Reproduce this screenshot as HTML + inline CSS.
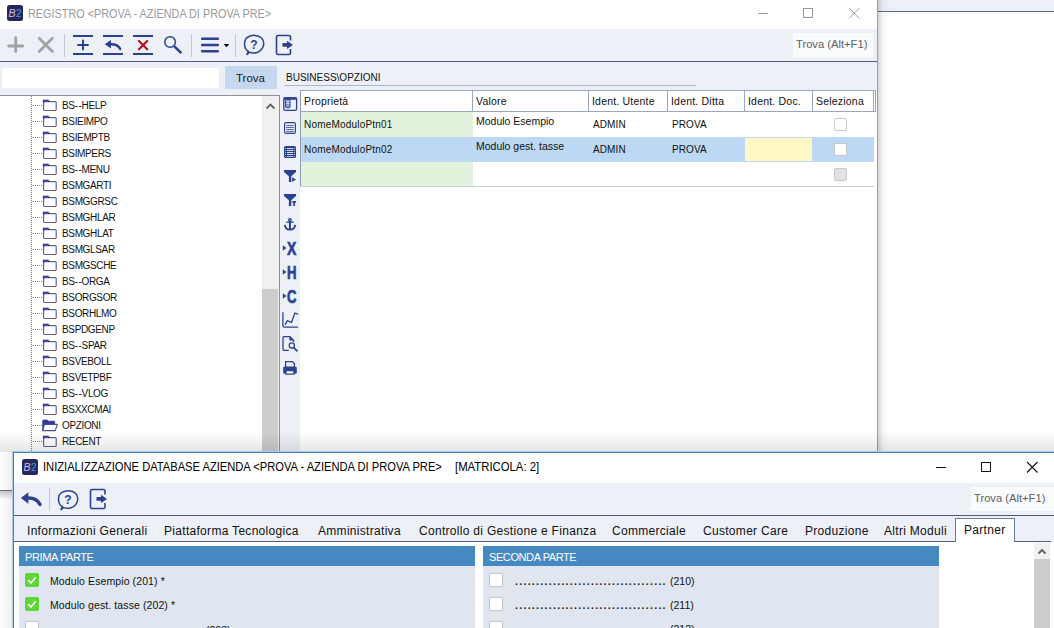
<!DOCTYPE html>
<html><head><meta charset="utf-8">
<style>
*{margin:0;padding:0;box-sizing:border-box}
html,body{width:1054px;height:628px;overflow:hidden;background:#fff;font-family:"Liberation Sans",sans-serif;color:#000}
.a{position:absolute}
.t{position:absolute;white-space:pre;line-height:1}
svg{position:absolute;overflow:visible}
</style></head><body>

<!-- background window on right -->
<div class="a" style="left:877px;top:0;width:177px;height:11px;background:#edf0f7"></div>
<div class="a" style="left:877px;top:11px;width:177px;height:1px;background:#5d6d8a"></div>
<div class="a" style="left:878px;top:0;width:12px;height:628px;background:linear-gradient(to right,rgba(0,0,0,0.16),rgba(0,0,0,0.04) 40%,rgba(0,0,0,0))"></div>
<div class="a" style="left:0;top:490px;width:877px;height:10px;background:linear-gradient(to bottom,rgba(0,0,0,0.12),rgba(0,0,0,0))"></div>

<!-- WINDOW 1 -->
<div id="w1" class="a" style="left:0;top:0;width:878px;height:491px;background:#fff;border-right:1px solid #8a8f99;border-bottom:1px solid #8a8f99">
</div>
<div id="w1c">
  <!-- title -->
  <svg style="left:7px;top:5px" width="16" height="16" viewBox="0 0 16 16">
    <rect x="0" y="0" width="16" height="16" rx="2.5" fill="#27285a"/>
    <text x="1.6" y="12" font-family="Liberation Sans" font-style="italic" font-size="10.5" fill="#c4c2e6">B</text>
    <text x="8.9" y="12" font-family="Liberation Sans" font-size="10" fill="#3a9ee0">2</text>
  </svg>
  <div class="t" style="left:28px;top:8px;font-size:12.2px;color:#9a9a9a;transform:scaleX(0.89);transform-origin:0 0">REGISTRO &lt;PROVA - AZIENDA DI PROVA PRE&gt;</div>
  <!-- window controls -->
  <svg style="left:0;top:0" width="877" height="29">
    <line x1="758" y1="13.5" x2="768" y2="13.5" stroke="#9a9a9a" stroke-width="1"/>
    <rect x="803.5" y="8.5" width="9" height="9" fill="none" stroke="#9a9a9a" stroke-width="1"/>
    <path d="M849 8 L859.5 18.5 M859.5 8 L849 18.5" stroke="#9a9a9a" stroke-width="0.9"/>
  </svg>
  <!-- toolbar -->
  <div class="a" style="left:0;top:29px;width:877px;height:66px;background:#edf0f7"></div>
  <div class="a" style="left:0;top:61px;width:877px;height:1px;background:#4e5f7e"></div>
  <svg style="left:0;top:29px" width="877" height="32" viewBox="0 29 877 32">
    <g stroke="#a3a3a3" stroke-width="2.8" stroke-linecap="round" fill="none">
      <path d="M15.7 37.6 V51.6 M8.7 46 H22.7"/>
      <path d="M39.2 38.2 L52.4 51.4 M52.4 38.2 L39.2 51.4"/>
    </g>
    <g stroke="#c3c7cf" stroke-width="1"><path d="M64.5 34 V57 M191.5 34 V57 M235.5 34 V57"/></g>
    <g fill="#2c4290">
      <rect x="73" y="35" width="20" height="2"/><rect x="73" y="53" width="20" height="2"/>
      <rect x="103" y="35" width="20" height="2"/><rect x="103" y="53" width="20" height="2"/>
      <rect x="133" y="35" width="20" height="2"/><rect x="133" y="53" width="20" height="2"/>
    </g>
    <path d="M83 40.5 V49.5 M78 45 H88" stroke="#2c4290" stroke-width="2" stroke-linecap="round"/>
    <path d="M104.8 44.2 L111 40 V48.4 Z" fill="#2c4290"/><path d="M110.5 44.2 Q117.5 43.8 120.2 48.9" fill="none" stroke="#2c4290" stroke-width="2.5" stroke-linecap="round"/>
    <path d="M139 41 L147.2 49.2 M147.2 41 L139 49.2" stroke="#b0141e" stroke-width="2.2" stroke-linecap="round"/>
    <circle cx="170.1" cy="42" r="5.3" fill="none" stroke="#2c4290" stroke-width="1.5"/>
    <path d="M174.6 46.6 L180.6 52.4" stroke="#2c4290" stroke-width="2.6" stroke-linecap="round"/>
    <g fill="#2c4290"><rect x="201" y="37.4" width="18" height="2.6" rx="1"/><rect x="201" y="43.7" width="18" height="2.6" rx="1"/><rect x="201" y="49.9" width="18" height="2.6" rx="1"/></g>
    <path d="M223.8 44 L229.3 44 L226.5 47.2 Z" fill="#000"/>
    <!-- help -->
    <path d="M248.3 51.2 C243.5 49 243.2 39.5 248 37 C252 34.6 258 34.8 261.5 38 C265.5 42 264 50 257 52.5 C254.5 53.3 251.5 53 249.5 52.3 L247 54.5 Z" fill="none" stroke="#2c4290" stroke-width="1.5" stroke-linejoin="round"/>
    <text x="254" y="48.6" text-anchor="middle" font-family="Liberation Sans" font-weight="bold" font-size="12" fill="#2c4290">?</text>
    <!-- exit -->
    <path d="M290.5 40.5 V37 Q290.5 35.5 289 35.5 H278 Q276.5 35.5 276.5 37 V53 Q276.5 54.5 278 54.5 H289 Q290.5 54.5 290.5 53 V49" fill="none" stroke="#2c4290" stroke-width="1.6"/>
    <path d="M282.5 43 H287 V40.8 L293 44.9 L287 49 V46.8 H282.5 Z" fill="#2c4290"/>
  </svg>
  <div class="a" style="left:793px;top:33px;width:80px;height:24px;background:#fafbfd"></div>
  <div class="t" style="left:796px;top:39px;font-size:11.2px;color:#5f5f5f">Trova (Alt+F1)</div>
  <!-- search row -->
  <div class="a" style="left:2px;top:68px;width:217px;height:20px;background:#fff"></div>
  <div class="a" style="left:225px;top:66px;width:52px;height:23px;background:#c5d8ef"></div>
  <div class="t" style="left:236px;top:73px;font-size:11.5px;color:#1a1a1a">Trova</div>
  <div class="t" style="left:286px;top:73px;font-size:10px;color:#111">BUSINESS\OPZIONI</div>
  <div class="a" style="left:284px;top:85px;width:412px;height:1px;background:#a9b8d0"></div>

  <!-- tree -->
  <div class="a" style="left:0;top:95px;width:280px;height:396px;background:#fff;border-top:1px solid #8d9096;border-right:1px solid #8d9096"></div>
  <div class="a" style="left:262px;top:96px;width:17px;height:395px;background:#f0f0f0"></div>
  <div class="a" style="left:262px;top:289px;width:16px;height:202px;background:#cdcdcd"></div>
  <svg style="left:262px;top:96px" width="17" height="20"><path d="M4.5 12.5 L8.5 8.5 L12.5 12.5" fill="none" stroke="#606060" stroke-width="1.8"/></svg>
  <div class="a" style="left:31px;top:96px;width:1px;height:395px;background:repeating-linear-gradient(to bottom,#808080 0 1px,transparent 1px 2px)"></div>
<div class="a" style="left:33px;top:105px;width:9px;height:1px;background:repeating-linear-gradient(to right,#808080 0 1px,transparent 1px 2px)"></div>
<svg style="left:42px;top:98px" width="16" height="14" viewBox="0 0 16 14"><rect x="1.6" y="3.6" width="12.6" height="8.9" rx="1" fill="#fff" stroke="#5d5f8c" stroke-width="1.15"/><path d="M1.6 4.5 V2.4 H6 L7.2 3.6" fill="none" stroke="#363b90" stroke-width="1.5"/></svg>
<div class="t" style="left:62px;top:101px;font-size:10px;letter-spacing:-0.35px;color:#111">BS<span style="letter-spacing:0.6px">-</span>-HELP</div>
<div class="a" style="left:33px;top:121px;width:9px;height:1px;background:repeating-linear-gradient(to right,#808080 0 1px,transparent 1px 2px)"></div>
<svg style="left:42px;top:114px" width="16" height="14" viewBox="0 0 16 14"><rect x="1.6" y="3.6" width="12.6" height="8.9" rx="1" fill="#fff" stroke="#5d5f8c" stroke-width="1.15"/><path d="M1.6 4.5 V2.4 H6 L7.2 3.6" fill="none" stroke="#363b90" stroke-width="1.5"/></svg>
<div class="t" style="left:62px;top:117px;font-size:10px;letter-spacing:-0.35px;color:#111">BSIEIMPO</div>
<div class="a" style="left:33px;top:137px;width:9px;height:1px;background:repeating-linear-gradient(to right,#808080 0 1px,transparent 1px 2px)"></div>
<svg style="left:42px;top:130px" width="16" height="14" viewBox="0 0 16 14"><rect x="1.6" y="3.6" width="12.6" height="8.9" rx="1" fill="#fff" stroke="#5d5f8c" stroke-width="1.15"/><path d="M1.6 4.5 V2.4 H6 L7.2 3.6" fill="none" stroke="#363b90" stroke-width="1.5"/></svg>
<div class="t" style="left:62px;top:133px;font-size:10px;letter-spacing:-0.35px;color:#111">BSIEMPTB</div>
<div class="a" style="left:33px;top:153px;width:9px;height:1px;background:repeating-linear-gradient(to right,#808080 0 1px,transparent 1px 2px)"></div>
<svg style="left:42px;top:146px" width="16" height="14" viewBox="0 0 16 14"><rect x="1.6" y="3.6" width="12.6" height="8.9" rx="1" fill="#fff" stroke="#5d5f8c" stroke-width="1.15"/><path d="M1.6 4.5 V2.4 H6 L7.2 3.6" fill="none" stroke="#363b90" stroke-width="1.5"/></svg>
<div class="t" style="left:62px;top:149px;font-size:10px;letter-spacing:-0.35px;color:#111">BSIMPERS</div>
<div class="a" style="left:33px;top:169px;width:9px;height:1px;background:repeating-linear-gradient(to right,#808080 0 1px,transparent 1px 2px)"></div>
<svg style="left:42px;top:162px" width="16" height="14" viewBox="0 0 16 14"><rect x="1.6" y="3.6" width="12.6" height="8.9" rx="1" fill="#fff" stroke="#5d5f8c" stroke-width="1.15"/><path d="M1.6 4.5 V2.4 H6 L7.2 3.6" fill="none" stroke="#363b90" stroke-width="1.5"/></svg>
<div class="t" style="left:62px;top:165px;font-size:10px;letter-spacing:-0.35px;color:#111">BS<span style="letter-spacing:0.6px">-</span>-MENU</div>
<div class="a" style="left:33px;top:185px;width:9px;height:1px;background:repeating-linear-gradient(to right,#808080 0 1px,transparent 1px 2px)"></div>
<svg style="left:42px;top:178px" width="16" height="14" viewBox="0 0 16 14"><rect x="1.6" y="3.6" width="12.6" height="8.9" rx="1" fill="#fff" stroke="#5d5f8c" stroke-width="1.15"/><path d="M1.6 4.5 V2.4 H6 L7.2 3.6" fill="none" stroke="#363b90" stroke-width="1.5"/></svg>
<div class="t" style="left:62px;top:181px;font-size:10px;letter-spacing:-0.35px;color:#111">BSMGARTI</div>
<div class="a" style="left:33px;top:201px;width:9px;height:1px;background:repeating-linear-gradient(to right,#808080 0 1px,transparent 1px 2px)"></div>
<svg style="left:42px;top:194px" width="16" height="14" viewBox="0 0 16 14"><rect x="1.6" y="3.6" width="12.6" height="8.9" rx="1" fill="#fff" stroke="#5d5f8c" stroke-width="1.15"/><path d="M1.6 4.5 V2.4 H6 L7.2 3.6" fill="none" stroke="#363b90" stroke-width="1.5"/></svg>
<div class="t" style="left:62px;top:197px;font-size:10px;letter-spacing:-0.35px;color:#111">BSMGGRSC</div>
<div class="a" style="left:33px;top:217px;width:9px;height:1px;background:repeating-linear-gradient(to right,#808080 0 1px,transparent 1px 2px)"></div>
<svg style="left:42px;top:210px" width="16" height="14" viewBox="0 0 16 14"><rect x="1.6" y="3.6" width="12.6" height="8.9" rx="1" fill="#fff" stroke="#5d5f8c" stroke-width="1.15"/><path d="M1.6 4.5 V2.4 H6 L7.2 3.6" fill="none" stroke="#363b90" stroke-width="1.5"/></svg>
<div class="t" style="left:62px;top:213px;font-size:10px;letter-spacing:-0.35px;color:#111">BSMGHLAR</div>
<div class="a" style="left:33px;top:233px;width:9px;height:1px;background:repeating-linear-gradient(to right,#808080 0 1px,transparent 1px 2px)"></div>
<svg style="left:42px;top:226px" width="16" height="14" viewBox="0 0 16 14"><rect x="1.6" y="3.6" width="12.6" height="8.9" rx="1" fill="#fff" stroke="#5d5f8c" stroke-width="1.15"/><path d="M1.6 4.5 V2.4 H6 L7.2 3.6" fill="none" stroke="#363b90" stroke-width="1.5"/></svg>
<div class="t" style="left:62px;top:229px;font-size:10px;letter-spacing:-0.35px;color:#111">BSMGHLAT</div>
<div class="a" style="left:33px;top:249px;width:9px;height:1px;background:repeating-linear-gradient(to right,#808080 0 1px,transparent 1px 2px)"></div>
<svg style="left:42px;top:242px" width="16" height="14" viewBox="0 0 16 14"><rect x="1.6" y="3.6" width="12.6" height="8.9" rx="1" fill="#fff" stroke="#5d5f8c" stroke-width="1.15"/><path d="M1.6 4.5 V2.4 H6 L7.2 3.6" fill="none" stroke="#363b90" stroke-width="1.5"/></svg>
<div class="t" style="left:62px;top:245px;font-size:10px;letter-spacing:-0.35px;color:#111">BSMGLSAR</div>
<div class="a" style="left:33px;top:265px;width:9px;height:1px;background:repeating-linear-gradient(to right,#808080 0 1px,transparent 1px 2px)"></div>
<svg style="left:42px;top:258px" width="16" height="14" viewBox="0 0 16 14"><rect x="1.6" y="3.6" width="12.6" height="8.9" rx="1" fill="#fff" stroke="#5d5f8c" stroke-width="1.15"/><path d="M1.6 4.5 V2.4 H6 L7.2 3.6" fill="none" stroke="#363b90" stroke-width="1.5"/></svg>
<div class="t" style="left:62px;top:261px;font-size:10px;letter-spacing:-0.35px;color:#111">BSMGSCHE</div>
<div class="a" style="left:33px;top:281px;width:9px;height:1px;background:repeating-linear-gradient(to right,#808080 0 1px,transparent 1px 2px)"></div>
<svg style="left:42px;top:274px" width="16" height="14" viewBox="0 0 16 14"><rect x="1.6" y="3.6" width="12.6" height="8.9" rx="1" fill="#fff" stroke="#5d5f8c" stroke-width="1.15"/><path d="M1.6 4.5 V2.4 H6 L7.2 3.6" fill="none" stroke="#363b90" stroke-width="1.5"/></svg>
<div class="t" style="left:62px;top:277px;font-size:10px;letter-spacing:-0.35px;color:#111">BS<span style="letter-spacing:0.6px">-</span>-ORGA</div>
<div class="a" style="left:33px;top:297px;width:9px;height:1px;background:repeating-linear-gradient(to right,#808080 0 1px,transparent 1px 2px)"></div>
<svg style="left:42px;top:290px" width="16" height="14" viewBox="0 0 16 14"><rect x="1.6" y="3.6" width="12.6" height="8.9" rx="1" fill="#fff" stroke="#5d5f8c" stroke-width="1.15"/><path d="M1.6 4.5 V2.4 H6 L7.2 3.6" fill="none" stroke="#363b90" stroke-width="1.5"/></svg>
<div class="t" style="left:62px;top:293px;font-size:10px;letter-spacing:-0.35px;color:#111">BSORGSOR</div>
<div class="a" style="left:33px;top:313px;width:9px;height:1px;background:repeating-linear-gradient(to right,#808080 0 1px,transparent 1px 2px)"></div>
<svg style="left:42px;top:306px" width="16" height="14" viewBox="0 0 16 14"><rect x="1.6" y="3.6" width="12.6" height="8.9" rx="1" fill="#fff" stroke="#5d5f8c" stroke-width="1.15"/><path d="M1.6 4.5 V2.4 H6 L7.2 3.6" fill="none" stroke="#363b90" stroke-width="1.5"/></svg>
<div class="t" style="left:62px;top:309px;font-size:10px;letter-spacing:-0.35px;color:#111">BSORHLMO</div>
<div class="a" style="left:33px;top:329px;width:9px;height:1px;background:repeating-linear-gradient(to right,#808080 0 1px,transparent 1px 2px)"></div>
<svg style="left:42px;top:322px" width="16" height="14" viewBox="0 0 16 14"><rect x="1.6" y="3.6" width="12.6" height="8.9" rx="1" fill="#fff" stroke="#5d5f8c" stroke-width="1.15"/><path d="M1.6 4.5 V2.4 H6 L7.2 3.6" fill="none" stroke="#363b90" stroke-width="1.5"/></svg>
<div class="t" style="left:62px;top:325px;font-size:10px;letter-spacing:-0.35px;color:#111">BSPDGENP</div>
<div class="a" style="left:33px;top:345px;width:9px;height:1px;background:repeating-linear-gradient(to right,#808080 0 1px,transparent 1px 2px)"></div>
<svg style="left:42px;top:338px" width="16" height="14" viewBox="0 0 16 14"><rect x="1.6" y="3.6" width="12.6" height="8.9" rx="1" fill="#fff" stroke="#5d5f8c" stroke-width="1.15"/><path d="M1.6 4.5 V2.4 H6 L7.2 3.6" fill="none" stroke="#363b90" stroke-width="1.5"/></svg>
<div class="t" style="left:62px;top:341px;font-size:10px;letter-spacing:-0.35px;color:#111">BS<span style="letter-spacing:0.6px">-</span>-SPAR</div>
<div class="a" style="left:33px;top:361px;width:9px;height:1px;background:repeating-linear-gradient(to right,#808080 0 1px,transparent 1px 2px)"></div>
<svg style="left:42px;top:354px" width="16" height="14" viewBox="0 0 16 14"><rect x="1.6" y="3.6" width="12.6" height="8.9" rx="1" fill="#fff" stroke="#5d5f8c" stroke-width="1.15"/><path d="M1.6 4.5 V2.4 H6 L7.2 3.6" fill="none" stroke="#363b90" stroke-width="1.5"/></svg>
<div class="t" style="left:62px;top:357px;font-size:10px;letter-spacing:-0.35px;color:#111">BSVEBOLL</div>
<div class="a" style="left:33px;top:377px;width:9px;height:1px;background:repeating-linear-gradient(to right,#808080 0 1px,transparent 1px 2px)"></div>
<svg style="left:42px;top:370px" width="16" height="14" viewBox="0 0 16 14"><rect x="1.6" y="3.6" width="12.6" height="8.9" rx="1" fill="#fff" stroke="#5d5f8c" stroke-width="1.15"/><path d="M1.6 4.5 V2.4 H6 L7.2 3.6" fill="none" stroke="#363b90" stroke-width="1.5"/></svg>
<div class="t" style="left:62px;top:373px;font-size:10px;letter-spacing:-0.35px;color:#111">BSVETPBF</div>
<div class="a" style="left:33px;top:393px;width:9px;height:1px;background:repeating-linear-gradient(to right,#808080 0 1px,transparent 1px 2px)"></div>
<svg style="left:42px;top:386px" width="16" height="14" viewBox="0 0 16 14"><rect x="1.6" y="3.6" width="12.6" height="8.9" rx="1" fill="#fff" stroke="#5d5f8c" stroke-width="1.15"/><path d="M1.6 4.5 V2.4 H6 L7.2 3.6" fill="none" stroke="#363b90" stroke-width="1.5"/></svg>
<div class="t" style="left:62px;top:389px;font-size:10px;letter-spacing:-0.35px;color:#111">BS<span style="letter-spacing:0.6px">-</span>-VLOG</div>
<div class="a" style="left:33px;top:409px;width:9px;height:1px;background:repeating-linear-gradient(to right,#808080 0 1px,transparent 1px 2px)"></div>
<svg style="left:42px;top:402px" width="16" height="14" viewBox="0 0 16 14"><rect x="1.6" y="3.6" width="12.6" height="8.9" rx="1" fill="#fff" stroke="#5d5f8c" stroke-width="1.15"/><path d="M1.6 4.5 V2.4 H6 L7.2 3.6" fill="none" stroke="#363b90" stroke-width="1.5"/></svg>
<div class="t" style="left:62px;top:405px;font-size:10px;letter-spacing:-0.35px;color:#111">BSXXCMAI</div>
<div class="a" style="left:33px;top:425px;width:9px;height:1px;background:repeating-linear-gradient(to right,#808080 0 1px,transparent 1px 2px)"></div>
<svg style="left:42px;top:418px" width="16" height="14" viewBox="0 0 16 14"><path d="M0.7 12.6 V3 Q0.7 2 1.7 2 H5.2 L6.2 3.2 H12.6 V6.2 H2.4 Z" fill="#3437a0" stroke="#3437a0" stroke-width="0.8" stroke-linejoin="round"/><path d="M2.4 6.4 H15.4 L13.2 12.6 H0.9 Z" fill="#fff" stroke="#4a4d8c" stroke-width="1.1" stroke-linejoin="round"/></svg>
<div class="t" style="left:62px;top:421px;font-size:10px;letter-spacing:-0.35px;color:#111">OPZIONI</div>
<div class="a" style="left:33px;top:441px;width:9px;height:1px;background:repeating-linear-gradient(to right,#808080 0 1px,transparent 1px 2px)"></div>
<svg style="left:42px;top:434px" width="16" height="14" viewBox="0 0 16 14"><rect x="1.6" y="3.6" width="12.6" height="8.9" rx="1" fill="#fff" stroke="#5d5f8c" stroke-width="1.15"/><path d="M1.6 4.5 V2.4 H6 L7.2 3.6" fill="none" stroke="#363b90" stroke-width="1.5"/></svg>
<div class="t" style="left:62px;top:437px;font-size:10px;letter-spacing:-0.35px;color:#111">RECENT</div>
<div class="a" style="left:33px;top:457px;width:9px;height:1px;background:repeating-linear-gradient(to right,#808080 0 1px,transparent 1px 2px)"></div>
<svg style="left:43px;top:450px" width="16" height="14" viewBox="0 0 16 14"><rect x="1" y="3" width="13" height="10" rx="1" fill="#fff" stroke="#5a5f9a" stroke-width="1.2"/><path d="M1 3.5 V2 H5.5 L6.8 3.3" fill="none" stroke="#3a3f9a" stroke-width="1.6"/></svg>

  <!-- icon column -->
  <div class="a" style="left:280px;top:95px;width:20px;height:396px;background:#edf0f7"></div>
  <svg style="left:280px;top:95px" width="20" height="290" viewBox="280 95 20 290">
<rect x="283.8" y="97.8" width="12.8" height="12.6" rx="1.6" fill="none" stroke="#2c4290" stroke-width="1.3"/>
<rect x="283.5" y="97.3" width="13.4" height="2.4" rx="0.8" fill="#2c4290"/>
<rect x="285.6" y="99.4" width="4.5" height="8.4" rx="1" fill="#8a9ad8" stroke="#2c4290" stroke-width="1"/>
<g fill="#fff"><rect x="286.4" y="101.2" width="3" height="0.7"/><rect x="286.4" y="103.1" width="3" height="0.7"/></g>
<rect x="284.6" y="122.6" width="10.8" height="10.8" rx="1.5" fill="none" stroke="#2c4290" stroke-width="1.2"/>
<g fill="#2c4290"><rect x="286.2" y="125" width="7.6" height="0.8"/><rect x="286.2" y="127" width="7.6" height="0.8"/><rect x="286.2" y="129" width="7.6" height="0.8"/><rect x="286.2" y="131" width="7.6" height="0.8"/></g>
<rect x="284" y="146" width="12" height="12" rx="1.6" fill="#2c4290"/>
<g fill="#fff"><rect x="285.3" y="148.2" width="0.8" height="0.8"/><rect x="285.3" y="150.2" width="0.8" height="0.8"/><rect x="285.3" y="152.2" width="0.8" height="0.8"/><rect x="285.3" y="154.2" width="0.8" height="0.8"/><rect x="285.3" y="156.2" width="0.8" height="0.6"/><rect x="294" y="148.2" width="0.8" height="0.8"/><rect x="294" y="150.2" width="0.8" height="0.8"/><rect x="294" y="152.2" width="0.8" height="0.8"/><rect x="294" y="154.2" width="0.8" height="0.8"/><rect x="294" y="156.2" width="0.8" height="0.6"/><rect x="287" y="148.2" width="6.3" height="0.8"/><rect x="287" y="150.2" width="6.3" height="0.8"/><rect x="287" y="152.2" width="6.3" height="0.8"/><rect x="287" y="154.2" width="6.3" height="0.8"/><rect x="287" y="156.2" width="6.3" height="0.6"/></g>
<path d="M284 170 H296 V172 L291.3 176.3 V182 H288.9 V176.3 L284 172 Z" fill="#2c4290"/>
<path d="M292.2 177.3 L296 179.6 L292.2 182 Z" fill="#2c4290"/>
<path d="M284 194 H296 V196 L291.3 200.3 V206 H288.9 V200.3 L284 196 Z" fill="#2c4290"/>
<path d="M292.2 201 H296 V202.8 H295 V206 H293.3 V202.8 H292.2 Z" fill="#2c4290"/>
<!-- anchor -->
<circle cx="289.9" cy="219.9" r="1.4" fill="#8a9ad8" stroke="#2c4290" stroke-width="1.1"/>
<path d="M289.95 221 V229" stroke="#2c4290" stroke-width="2"/>
<path d="M286.2 222.2 H293.7" stroke="#2c4290" stroke-width="1.3"/>
<path d="M284.8 224.8 Q285.3 229.6 290 229.6 Q294.7 229.6 295.2 224.8" fill="none" stroke="#2c4290" stroke-width="1.8"/>
<!-- >X >H >C -->
<path d="M282.8 245.3 L286.5 248 L282.8 250.7 Z" fill="#2c4290"/>
<text transform="translate(287,254.6) scale(0.8,1)" font-family="Liberation Sans" font-weight="bold" font-size="17.5" fill="#2c4290" stroke="#2c4290" stroke-width="0.7">X</text>
<path d="M282.8 269.3 L286.5 272 L282.8 274.7 Z" fill="#2c4290"/>
<text transform="translate(287,278.6) scale(0.75,1)" font-family="Liberation Sans" font-weight="bold" font-size="17.5" fill="#2c4290" stroke="#2c4290" stroke-width="0.7">H</text>
<path d="M282.8 293.3 L286.5 296 L282.8 298.7 Z" fill="#2c4290"/>
<text transform="translate(287,302.6) scale(0.75,1)" font-family="Liberation Sans" font-weight="bold" font-size="17.5" fill="#2c4290" stroke="#2c4290" stroke-width="0.7">C</text>
<!-- chart -->
<path d="M282.9 312.2 V325.5 Q282.9 327.2 284.6 327.2 H298" fill="none" stroke="#2c4290" stroke-width="1.3"/>
<path d="M285.3 324.4 L287.4 320.6 L291.5 322.5 L294.9 313 L297.6 314.1" fill="none" stroke="#2c4290" stroke-width="1.3" stroke-linejoin="round" stroke-linecap="round"/>
<!-- doc search -->
<path d="M288.8 350.3 H284.2 Q283 350.3 283 349 V337.9 Q283 336.7 284.2 336.7 H290 L293.6 340.4 V342" fill="none" stroke="#2c4290" stroke-width="1.3" stroke-linejoin="round"/>
<path d="M289.4 336.7 H290.2 L293.8 340.5 H289.4 Z" fill="#2c4290"/>
<circle cx="291.8" cy="345.4" r="2.6" fill="none" stroke="#2c4290" stroke-width="1.3"/>
<path d="M293.8 347.6 L297 350.9" stroke="#2c4290" stroke-width="1.7" stroke-linecap="round"/>
<!-- printer -->
<path d="M285.6 367 V361.6 H292.4 L294.4 363.6 V367" fill="none" stroke="#2c4290" stroke-width="1.3"/>
<rect x="283.2" y="366.6" width="13.6" height="7.2" rx="1.5" fill="#2c4290"/>
<rect x="286.3" y="371.3" width="7.3" height="2.2" fill="#fff"/>
<path d="M285.9 371 V374.2 H294 V371" fill="none" stroke="#2c4290" stroke-width="1.1"/>
</svg>

  <!-- grid -->
  <div class="a" style="left:300px;top:90px;width:577px;height:401px;background:#fff"></div>
<div class="a" style="left:300px;top:90px;width:1px;height:97px;background:#8f9bb3"></div>
  <div class="a" style="left:300px;top:90px;width:576px;height:1px;background:#9aa6bc"></div>
<div class="a" style="left:300px;top:111px;width:576px;height:1px;background:#9aa6bc"></div>
<div class="a" style="left:472px;top:91px;width:1px;height:20px;background:#9aa6bc"></div>
<div class="a" style="left:588px;top:91px;width:1px;height:20px;background:#9aa6bc"></div>
<div class="a" style="left:667px;top:91px;width:1px;height:20px;background:#9aa6bc"></div>
<div class="a" style="left:744px;top:91px;width:1px;height:20px;background:#9aa6bc"></div>
<div class="a" style="left:812px;top:91px;width:1px;height:20px;background:#9aa6bc"></div>
<div class="a" style="left:873px;top:91px;width:1px;height:20px;background:#9aa6bc"></div>
<div class="a" style="left:875px;top:91px;width:1px;height:20px;background:#9aa6bc"></div>
<div class="t" style="left:304px;top:96px;font-size:10.5px;letter-spacing:0.2px;color:#111">Proprietà</div>
<div class="t" style="left:476px;top:96px;font-size:10.5px;letter-spacing:0.2px;color:#111">Valore</div>
<div class="t" style="left:592px;top:96px;font-size:10.5px;letter-spacing:0.2px;color:#111">Ident. Utente</div>
<div class="t" style="left:671px;top:96px;font-size:10.5px;letter-spacing:0.2px;color:#111">Ident. Ditta</div>
<div class="t" style="left:748px;top:96px;font-size:10.5px;letter-spacing:0.2px;color:#111">Ident. Doc.</div>
<div class="t" style="left:816px;top:96px;font-size:10.5px;letter-spacing:0.2px;color:#111">Seleziona</div>
<div class="a" style="left:301px;top:112px;width:172px;height:25px;background:#e2f2dd"></div>
<div class="t" style="left:304px;top:120px;font-size:10px;letter-spacing:0.2px;color:#111">NomeModuloPtn01</div>
<div class="t" style="left:476px;top:116px;font-size:10.5px;color:#111">Modulo Esempio</div>
<div class="t" style="left:593px;top:120px;font-size:10px;letter-spacing:0.1px;color:#111">ADMIN</div>
<div class="t" style="left:672px;top:120px;font-size:10px;letter-spacing:0.1px;color:#111">PROVA</div>
<div class="a" style="left:834px;top:118px;width:13px;height:13px;background:#fff;border:1px solid #c8c8c8;border-radius:2px"></div>
<div class="a" style="left:301px;top:137px;width:573px;height:25px;background:#bdd8f5"></div>
<div class="a" style="left:745px;top:138px;width:67px;height:23px;background:#fff8c4"></div>
<div class="t" style="left:304px;top:145px;font-size:10px;letter-spacing:0.2px;color:#111">NomeModuloPtn02</div>
<div class="t" style="left:476px;top:141px;font-size:10.5px;color:#111">Modulo gest. tasse</div>
<div class="t" style="left:593px;top:145px;font-size:10px;letter-spacing:0.1px;color:#111">ADMIN</div>
<div class="t" style="left:672px;top:145px;font-size:10px;letter-spacing:0.1px;color:#111">PROVA</div>
<div class="a" style="left:834px;top:143px;width:13px;height:13px;background:#fff;border:1px solid #c8c8c8;border-radius:2px"></div>
<div class="a" style="left:301px;top:162px;width:172px;height:24px;background:#e2f2dd"></div>
<div class="a" style="left:834px;top:168px;width:13px;height:13px;background:#e2e2e2;border:1px solid #c8c8c8;border-radius:2px"></div>
<div class="a" style="left:300px;top:186px;width:574px;height:1px;background:#c4cfdf"></div>
</div>

<div class="a" style="left:877px;top:0;width:1px;height:491px;background:#9a9ea6"></div>
<!-- WINDOW 2 shadow -->
<div class="a" style="left:0;top:432px;width:1054px;height:20px;background:linear-gradient(to bottom,rgba(0,0,0,0),rgba(0,0,0,0.10))"></div>
<div class="a" style="left:0;top:452px;width:13px;height:176px;background:linear-gradient(to right,rgba(0,0,0,0),rgba(0,0,0,0.07))"></div>
<div class="a" style="left:0;top:490px;width:13px;height:1px;background:#6c6c6c"></div>
<div class="a" style="left:0;top:491px;width:13px;height:8px;background:linear-gradient(to bottom,rgba(0,0,0,0.10),rgba(0,0,0,0))"></div>
<div class="a" style="left:12px;top:451px;width:1042px;height:177px;border-top:1px solid #a9cdee;border-left:1px solid #a9cdee"></div>
<!-- WINDOW 2 -->
<div id="w2" class="a" style="left:13px;top:452px;width:1041px;height:176px;background:#fff;border-top:1px solid #4a7fb5;border-left:1px solid #4a7fb5"></div>
<svg style="left:22px;top:459px" width="16" height="16" viewBox="0 0 16 16">
    <rect x="0" y="0" width="16" height="16" rx="2.5" fill="#27285a"/>
    <text x="1.6" y="12" font-family="Liberation Sans" font-style="italic" font-size="10.5" fill="#c4c2e6">B</text>
    <text x="8.9" y="12" font-family="Liberation Sans" font-size="10" fill="#3a9ee0">2</text>
  </svg>
<div class="t" style="left:43px;top:461px;font-size:12.2px;color:#000;transform:scaleX(0.915);transform-origin:0 0">INIZIALIZZAZIONE DATABASE AZIENDA &lt;PROVA - AZIENDA DI PROVA PRE&gt;</div>
<div class="t" style="left:455px;top:461px;font-size:12.2px;color:#000;transform:scaleX(0.93);transform-origin:0 0">[MATRICOLA: 2]</div>
<svg style="left:0;top:452px" width="1054" height="31" viewBox="0 452 1054 31">
    <line x1="936" y1="467.5" x2="946" y2="467.5" stroke="#111" stroke-width="1"/>
    <rect x="981.5" y="462.5" width="9" height="9" fill="none" stroke="#111" stroke-width="1"/>
    <path d="M1027 462 L1037.5 472.5 M1037.5 462 L1027 472.5" stroke="#111" stroke-width="1.1"/>
  </svg>
<div class="a" style="left:14px;top:483px;width:1040px;height:59px;background:#edf0f7"></div>
<div class="a" style="left:14px;top:515px;width:1040px;height:1px;background:#4e5f7e"></div>
<svg style="left:0;top:483px" width="1054" height="32" viewBox="0 483 1054 32">
    <path d="M20.8 498 L28.4 492.2 V503.8 Z" fill="#2c4290"/><path d="M27.5 498 Q36.5 497.6 39.9 504.3" fill="none" stroke="#2c4290" stroke-width="3.6" stroke-linecap="round"/>
    <path d="M49.5 488 V511" stroke="#c3c7cf" stroke-width="1"/>
    <path d="M62.3 506.5 C57.5 504.3 57.2 494.8 62 492.3 C66 489.9 72 490.1 75.5 493.3 C79.5 497.3 78 505.3 71 507.8 C68.5 508.6 65.5 508.3 63.5 507.6 L61 509.8 Z" fill="none" stroke="#2c4290" stroke-width="1.5" stroke-linejoin="round"/>
    <text x="68" y="503.9" text-anchor="middle" font-family="Liberation Sans" font-weight="bold" font-size="12" fill="#2c4290">?</text>
    <path d="M105 494.5 V491 Q105 489.5 103.5 489.5 H92 Q90.5 489.5 90.5 491 V507 Q90.5 508.5 92 508.5 H103.5 Q105 508.5 105 507 V503" fill="none" stroke="#2c4290" stroke-width="1.6"/>
    <path d="M96.5 497 H101 V494.8 L107 498.9 L101 503 V500.8 H96.5 Z" fill="#2c4290"/>
  </svg>
<div class="a" style="left:971px;top:487px;width:83px;height:24px;background:#fafbfd"></div>
<div class="t" style="left:974px;top:493px;font-size:11.2px;color:#5f5f5f">Trova (Alt+F1)</div>
<div class="t" style="left:27px;top:525px;font-size:12px;letter-spacing:0.3px;color:#111">Informazioni Generali</div>
<div class="t" style="left:164px;top:525px;font-size:12px;letter-spacing:0.3px;color:#111">Piattaforma Tecnologica</div>
<div class="t" style="left:318px;top:525px;font-size:12px;letter-spacing:0.3px;color:#111">Amministrativa</div>
<div class="t" style="left:419px;top:525px;font-size:12px;letter-spacing:0.3px;color:#111">Controllo di Gestione e Finanza</div>
<div class="t" style="left:612px;top:525px;font-size:12px;letter-spacing:0.3px;color:#111">Commerciale</div>
<div class="t" style="left:703px;top:525px;font-size:12px;letter-spacing:0.3px;color:#111">Customer Care</div>
<div class="t" style="left:805px;top:525px;font-size:12px;letter-spacing:0.3px;color:#111">Produzione</div>
<div class="t" style="left:884px;top:525px;font-size:12px;letter-spacing:0.3px;color:#111">Altri Moduli</div>
<div class="a" style="left:14px;top:541px;width:1037px;height:1px;background:#4e5f7e"></div>
<div class="a" style="left:14px;top:542px;width:1040px;height:86px;background:#fff"></div>
<div class="a" style="left:955px;top:518px;width:60px;height:24px;background:#fff;border:1px solid #6d7d99;border-bottom:none"></div>
<div class="t" style="left:964px;top:524px;font-size:12px;letter-spacing:0.3px;color:#111">Partner</div>
<div class="a" style="left:19px;top:546px;width:456px;height:20px;background:#4589c3"></div>
<div class="a" style="left:19px;top:566px;width:456px;height:62px;background:#dfe6f0"></div>
<div class="t" style="left:25px;top:552px;font-size:11px;letter-spacing:-0.4px;color:#fff">PRIMA PARTE</div>
<div class="a" style="left:483px;top:546px;width:456px;height:20px;background:#4589c3"></div>
<div class="a" style="left:483px;top:566px;width:456px;height:62px;background:#dfe6f0"></div>
<div class="t" style="left:489px;top:552px;font-size:11px;letter-spacing:-0.4px;color:#fff">SECONDA PARTE</div>
<svg style="left:25px;top:573px" width="14" height="14" viewBox="0 0 14 14"><rect x="0" y="0" width="14" height="14" rx="2" fill="#5ed636"/><path d="M3.2 7.2 L5.9 10 L10.8 4.3" fill="none" stroke="#fff" stroke-width="1.8"/></svg>
<div class="a" style="left:489px;top:573px;width:14px;height:14px;background:#fff;border:1px solid #c3c3c3;border-radius:2px"></div>
<svg style="left:25px;top:597px" width="14" height="14" viewBox="0 0 14 14"><rect x="0" y="0" width="14" height="14" rx="2" fill="#5ed636"/><path d="M3.2 7.2 L5.9 10 L10.8 4.3" fill="none" stroke="#fff" stroke-width="1.8"/></svg>
<div class="a" style="left:489px;top:597px;width:14px;height:14px;background:#fff;border:1px solid #c3c3c3;border-radius:2px"></div>
<div class="a" style="left:25px;top:621px;width:14px;height:14px;background:#fff;border:1px solid #c3c3c3;border-radius:2px"></div>
<div class="a" style="left:489px;top:621px;width:14px;height:14px;background:#fff;border:1px solid #c3c3c3;border-radius:2px"></div>
<div class="t" style="left:50px;top:576px;font-size:10.5px;letter-spacing:0.1px;color:#111">Modulo Esempio (201) *</div>
<div class="t" style="left:50px;top:600px;font-size:10.5px;letter-spacing:0.1px;color:#111">Modulo gest. tasse (202) *</div>
<div class="t" style="left:206px;top:625px;font-size:10.5px;color:#111">(203)</div>
<div class="t" style="left:515px;top:576px;font-size:10.5px;letter-spacing:1.3px;font-weight:bold;color:#222">....................................</div>
<div class="t" style="left:670px;top:576px;font-size:10.5px;color:#111">(210)</div>
<div class="t" style="left:515px;top:600px;font-size:10.5px;letter-spacing:1.3px;font-weight:bold;color:#222">....................................</div>
<div class="t" style="left:670px;top:600px;font-size:10.5px;color:#111">(211)</div>
<div class="t" style="left:515px;top:624px;font-size:10.5px;letter-spacing:1.3px;font-weight:bold;color:#222">....................................</div>
<div class="t" style="left:670px;top:624px;font-size:10.5px;color:#111">(212)</div>
<div class="a" style="left:1034px;top:543px;width:16px;height:85px;background:#f0f0f0"></div>
<div class="a" style="left:1034px;top:559px;width:16px;height:69px;background:#cdcdcd"></div>
<svg style="left:1034px;top:543px" width="16" height="16"><path d="M4.5 10.5 L8 7 L11.5 10.5" fill="none" stroke="#606060" stroke-width="1.8"/></svg>

</body></html>
